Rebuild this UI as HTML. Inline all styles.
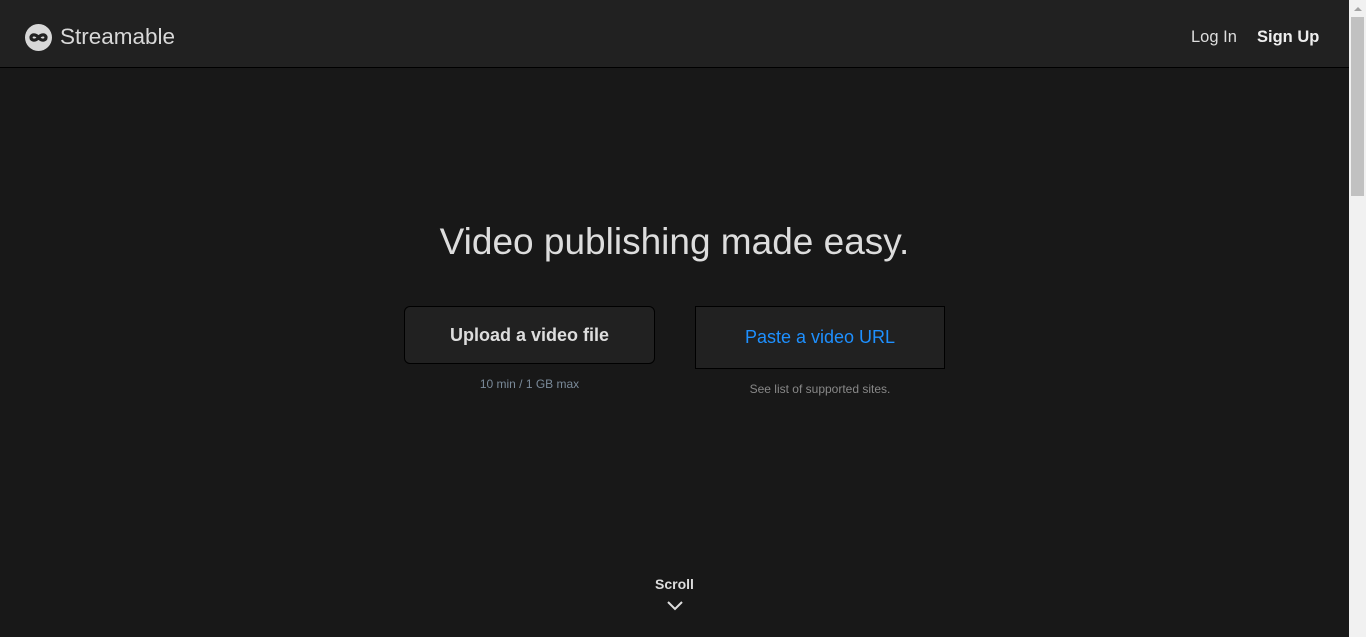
<!DOCTYPE html>
<html><head><style>
html,body{margin:0;padding:0;width:1366px;height:637px;overflow:hidden;background:#181818;font-family:"Liberation Sans",sans-serif}
.nav{position:absolute;left:0;top:0;width:1349px;height:67px;background:#212121;border-bottom:1px solid #000}
.logo{position:absolute;left:25px;top:24px;width:27px;height:27px;border-radius:50%;background:#d8d8d8}
.brand{position:absolute;left:60px;top:24px;font-size:22.5px;color:#d8d8d8}
.login{position:absolute;left:1191px;top:28px;font-size:16.5px;color:#ddd}
.signup{position:absolute;left:1257px;top:28px;font-size:16.5px;color:#eee;font-weight:bold}
.sb{position:absolute;left:1349px;top:0;width:17px;height:637px;background:#f1f1f1}
.thumb{position:absolute;left:2px;top:17px;width:13px;height:179px;background:#c1c1c1}
.arr{position:absolute;left:5px;top:7px;width:0;height:0;border-left:4px solid transparent;border-right:4px solid transparent;border-bottom:4px solid #a3a3a3}
h1{position:absolute;left:0;width:1349px;top:221px;margin:0;text-align:center;font-weight:normal;font-size:37px;color:#ddd}
.b1{position:absolute;left:404px;top:306px;width:249px;height:56px;border:1px solid #000;border-radius:6px;background:#212121;color:#ddd;font-weight:bold;font-size:18px;text-align:center;line-height:56px}
.b2{position:absolute;left:695px;top:306px;width:248px;height:61px;border:1px solid #000;background:#212121;color:#1e90ff;font-size:18px;text-align:center;line-height:61px}
.s1{position:absolute;left:404px;width:251px;top:377px;text-align:center;font-size:12px;color:#7a8a99}
.s2{position:absolute;left:695px;width:250px;top:382px;text-align:center;font-size:12px;color:#888}
.scroll{position:absolute;left:0;width:1349px;top:576px;text-align:center;font-size:14px;font-weight:bold;color:#ddd;line-height:16px}
.scroll svg{display:block;margin:6px auto 0}
</style></head><body>
<div class="nav">
<div class="logo"><svg width="27" height="27" viewBox="0 0 27 27"><path d="M13.5 13.5c-2.5-3.5-7.5-3.5-7.5 0s5 3.5 7.5 0 7.5-3.5 7.5 0-5 3.5-7.5 0" fill="none" stroke="#212121" stroke-width="3.2"/></svg></div>
<div class="brand">Streamable</div>
<div class="login">Log In</div><div class="signup">Sign Up</div>
</div>
<div class="sb"><div class="arr"></div><div class="thumb"></div></div>
<h1>Video publishing made easy.</h1>
<div class="b1">Upload a video file</div>
<div class="b2">Paste a video URL</div>
<div class="s1">10 min / 1 GB max</div>
<div class="s2">See list of supported sites.</div>
<div class="scroll">Scroll<svg width="20" height="14" viewBox="0 0 20 14"><path d="M3 4l7 7 7-7" fill="none" stroke="#ddd" stroke-width="2"/></svg></div>
</body></html>
